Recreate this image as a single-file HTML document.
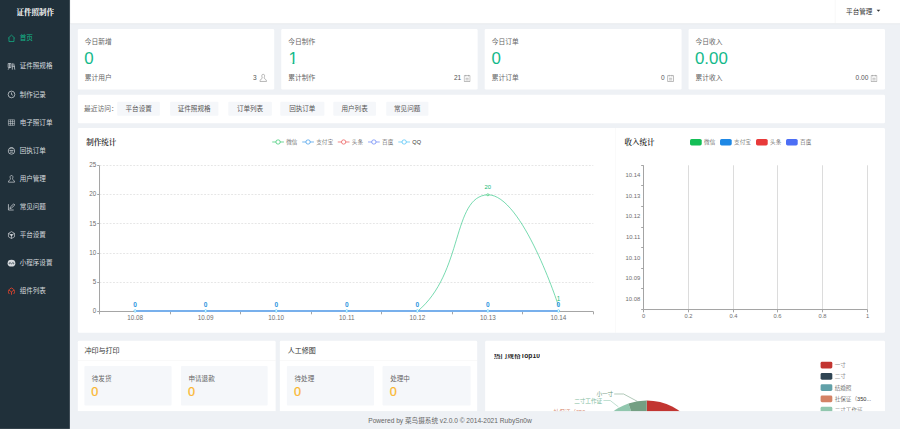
<!DOCTYPE html><html lang="zh-CN"><head><meta charset="utf-8"><title>证件照制作</title><style>
*{box-sizing:border-box;margin:0;padding:0}
html,body{width:900px;height:429px;overflow:hidden;background:#eef1f5}
body{font-family:"Liberation Sans","Noto Sans CJK SC",sans-serif;font-size:14px;color:#555}
#w{position:absolute;left:0;top:0;width:1920px;height:920px;transform:scale(0.46875);transform-origin:0 0;background:#eef1f5;overflow:hidden}
.abs{position:absolute}
#side{z-index:5;position:absolute;left:0;top:0;width:149px;height:915px;background:#20303a}
#logo{position:absolute;left:0;top:0;width:150px;height:50px;line-height:50px;text-align:center;color:#fff;font:bold 16px/50px "Noto Serif CJK SC","Liberation Serif",serif}
.mi{position:absolute;left:0;width:150px;height:60px;line-height:60px;color:#d6dade;font-size:14px;padding-left:42px;white-space:nowrap}
.mi svg{position:absolute;left:14.5px;top:20.5px;width:19px;height:19px}
.mi.on{color:#13b98a}
#head{position:absolute;left:150px;top:0;width:1770px;height:50px;background:#fff;box-shadow:0 1px 2px rgba(0,0,0,.05)}
#user{position:absolute;left:1781px;top:0;width:139px;height:50px;border-left:1px solid #f0f0f0;line-height:48px;font-size:14px;color:#333}
.card{position:absolute;background:#fff;border-radius:3px}
.lab{position:absolute;font-size:14.4px;color:#666;white-space:nowrap;line-height:20px}
.big{position:absolute;font-size:36px;line-height:40px;color:#13b98a;font-family:"Liberation Sans",sans-serif}
.rt{position:absolute;right:15.5px;font-size:14px;color:#555;line-height:20px;white-space:nowrap}
.rt svg{vertical-align:-4px;margin-left:5px}
.tag{position:absolute;top:15px;height:30px;line-height:30px;background:#f5f7fa;border-radius:2px;font-size:14px;color:#555;text-align:center;white-space:nowrap}
.ct{position:absolute;font:600 16px/24px "Liberation Sans","Noto Serif CJK SC",serif;color:#222;white-space:nowrap}
.ch{position:absolute;left:0;top:0;right:0;height:42px;border-bottom:1px solid #f2f2f2;line-height:43px;padding-left:14px;font-size:15px;color:#333}
.box{position:absolute;background:#f5f7fa;border-radius:2px}
.box .l{position:absolute;left:16px;top:16.5px;font-size:14px;line-height:20px;color:#666;white-space:nowrap}
.box .n{position:absolute;left:15px;top:36.5px;font-size:27px;line-height:36px;color:#fbb62d;-webkit-text-stroke:0.5px #fbb62d;font-family:"Liberation Sans",sans-serif}
#foot{position:absolute;left:0;top:877px;width:1920px;height:43px;background:#eef1f5;line-height:40px;text-align:center;font-size:14.1px;color:#666}
.big.one{margin-left:1.5px;clip-path:polygon(0 0,100% 0,100% 28px,12.6px 28px,12.6px 100%,8.4px 100%,8.4px 28px,0 28px)}
svg text{font-family:"Liberation Sans","Noto Sans CJK SC",sans-serif}
svg text:not([font-weight]){font-weight:300}
.pt{margin-top:-3.4px;font:bold 14.3px/14px "Liberation Sans","Noto Serif CJK SC",serif;color:#222;white-space:nowrap}
</style></head><body><div id="w"><div id="side"><div id="logo">证件照制作</div>
<div class="mi on" style="top:51px"><svg viewBox="0 0 16 16"><path d="M2 8 L8 2.5 L14 8 M3.5 7 V14 H12.5 V7" fill="none" stroke="currentColor" stroke-width="1.3"/></svg>首页</div>
<div class="mi" style="top:111px"><svg viewBox="0 0 16 16"><path d="M2 3 H7 V10 H2 Z M4.5 10 L2 14 M4.5 3 V10 M9.5 2.5 V14 M9.5 8 H14 M12 3 L14 14" fill="none" stroke="currentColor" stroke-width="1.3"/></svg>证件照规格</div>
<div class="mi" style="top:171px"><svg viewBox="0 0 16 16"><circle cx="8" cy="8" r="6" fill="none" stroke="currentColor" stroke-width="1.3"/><path d="M8 4.5 V8 L10.5 9.5" fill="none" stroke="currentColor" stroke-width="1.3"/></svg>制作记录</div>
<div class="mi" style="top:231px"><svg viewBox="0 0 16 16"><path d="M2.5 3 H13.5 V13 H2.5 Z M6.2 3 V13 M9.8 3 V13 M2.5 6.3 H13.5 M2.5 9.7 H13.5" fill="none" stroke="currentColor" stroke-width="1.5" opacity=".6"/></svg>电子照订单</div>
<div class="mi" style="top:291px"><svg viewBox="0 0 16 16"><circle cx="8" cy="8.5" r="5.8" fill="none" stroke="currentColor" stroke-width="1.3"/><path d="M4.5 7.5 H11.5 M5.5 10.5 H10.5 M5 3 H11" fill="none" stroke="currentColor" stroke-width="1.3"/></svg>回执订单</div>
<div class="mi" style="top:351px"><svg viewBox="0 0 16 16"><path d="M8 2 C5.8 2 5.2 4 5.6 6 C5.9 7.5 6.5 8 6 9 C5 10.3 2.5 10.5 2.5 14 H13.5 C13.5 10.5 11 10.3 10 9 C9.5 8 10.1 7.5 10.4 6 C10.8 4 10.2 2 8 2 Z" fill="none" stroke="currentColor" stroke-width="1.2"/></svg>用户管理</div>
<div class="mi" style="top:411px"><svg viewBox="0 0 16 16"><path d="M2.5 3 V13.5 H12 M5 11 L6 8 L12 2.5 L14 4.5 L8 10 Z" fill="none" stroke="currentColor" stroke-width="1.3"/></svg>常见问题</div>
<div class="mi" style="top:471px"><svg viewBox="0 0 16 16"><path d="M8 1.8 L13.5 5 V11 L8 14.2 L2.5 11 V5 Z M2.5 5 L8 8 L13.5 5 M8 8 V14" fill="none" stroke="currentColor" stroke-width="1.2"/><circle cx="8" cy="8" r="2" fill="currentColor"/></svg>平台设置</div>
<div class="mi" style="top:531px"><svg viewBox="0 0 16 16"><ellipse cx="8" cy="8" rx="7" ry="6" fill="currentColor"/><path d="M5 9.5 C3.5 9.5 3.5 7 5.3 7 C6.8 7 6.8 9 8 9 C9.2 9 9.2 7 10.7 7 C12.5 7 12.5 9.5 11 9.5" fill="none" stroke="#20303a" stroke-width="1.3"/></svg>小程序设置</div>
<div class="mi" style="top:591px"><svg viewBox="0 0 16 16"><path d="M4.2 12.8 C1.8 11 1.8 5.5 5 3.6 L8 2 L11 3.6 C14.2 5.5 14.2 11 11.8 12.8 M3.6 6 L8 9 L12.4 6 M8 9 V14.2" fill="none" stroke="#e8452c" stroke-width="1.5"/></svg>组件列表</div>
</div>
<div id="head"></div><div id="user"><span style="position:absolute;left:23px">平台管理</span><span style="position:absolute;left:88px;top:20.5px;border:4px solid transparent;border-top:4.8px solid #333;width:0;height:0"></span></div>
<div class="card" style="left:165.8px;top:62px;width:419.3px;height:129px"><div class="lab" style="left:15px;top:16.5px">今日新增</div><div class="big" style="left:14px;top:43px">0</div><div class="lab" style="left:15px;top:94px">累计用户</div><div class="rt" style="top:94px">3<svg width="17" height="18" viewBox="1.5 1 13 14"><path d="M8 2 C6 2 5.4 4 5.8 6 C6.1 7.5 6.6 8 6.1 9 C5.1 10.3 2.5 10.5 2.5 14 H13.5 C13.5 10.5 10.9 10.3 9.9 9 C9.4 8 9.9 7.5 10.2 6 C10.6 4 10 2 8 2 Z" fill="none" stroke="#9c9c9c" stroke-width="1.25"/></svg></div></div>
<div class="card" style="left:600.1px;top:62px;width:419.3px;height:129px"><div class="lab" style="left:15px;top:16.5px">今日制作</div><div class="big one" style="left:14px;top:43px">1</div><div class="lab" style="left:15px;top:94px">累计制作</div><div class="rt" style="top:94px">21<svg width="15" height="16" viewBox="1.5 1 13 14"><path d="M2.5 3 H13.5 V14 H2.5 Z M5.5 1.5 V4.5 M10.5 1.5 V4.5 M5 8 H11 M5 11 H11" fill="none" stroke="#9c9c9c" stroke-width="1.25"/></svg></div></div>
<div class="card" style="left:1034.3px;top:62px;width:419.3px;height:129px"><div class="lab" style="left:15px;top:16.5px">今日订单</div><div class="big" style="left:14px;top:43px">0</div><div class="lab" style="left:15px;top:94px">累计订单</div><div class="rt" style="top:94px">0<svg width="15" height="16" viewBox="1.5 1 13 14"><path d="M2.5 3 H13.5 V14 H2.5 Z M5.5 1.5 V4.5 M10.5 1.5 V4.5 M5 8 H11 M5 11 H11" fill="none" stroke="#9c9c9c" stroke-width="1.25"/></svg></div></div>
<div class="card" style="left:1468.6px;top:62px;width:419.3px;height:129px"><div class="lab" style="left:15px;top:16.5px">今日收入</div><div class="big" style="left:14px;top:43px">0.00</div><div class="lab" style="left:15px;top:94px">累计收入</div><div class="rt" style="top:94px">0.00<svg width="15" height="16" viewBox="1.5 1 13 14"><path d="M2.5 3 H13.5 V14 H2.5 Z M5.5 1.5 V4.5 M10.5 1.5 V4.5 M5 8 H11 M5 11 H11" fill="none" stroke="#9c9c9c" stroke-width="1.25"/></svg></div></div>
<div class="card" style="left:166px;top:202px;width:1722px;height:61px"><div class="lab" style="left:13px;top:20px">最近访问：</div>
<div class="tag" style="left:84.3px;width:91.0px">平台设置</div>
<div class="tag" style="left:196.7px;width:103.0px">证件照规格</div>
<div class="tag" style="left:321.0px;width:92.7px">订单列表</div>
<div class="tag" style="left:431.8px;width:94.2px">回执订单</div>
<div class="tag" style="left:545.0px;width:91.0px">用户列表</div>
<div class="tag" style="left:657.5px;width:90.2px">常见问题</div>
</div>
<div class="card" style="left:166px;top:272.5px;width:1722px;height:437px"></div>
<div class="abs" style="left:1313px;top:272.5px;width:1px;height:437px;background:#f4f4f4"></div>
<div class="ct" style="left:184.0px;top:291.9px">制作统计</div>
<div class="ct" style="left:1332.3px;top:291.9px">收入统计</div>
<div class="card" style="left:166.0px;top:727px;width:422.2px;height:160px"><div class="ch" style="padding-left:14px">冲印与打印</div><div class="box" style="left:13.8px;top:53.8px;width:186.5px;height:84.5px"><div class="l">待发货</div><div class="n">0</div></div><div class="box" style="left:220.1px;top:53.8px;width:185.0px;height:84.5px"><div class="l">申请退款</div><div class="n">0</div></div></div>
<div class="card" style="left:596.7px;top:727px;width:421.5px;height:160px"><div class="ch" style="padding-left:17px">人工修图</div><div class="box" style="left:15.6px;top:53.8px;width:185.6px;height:84.5px"><div class="l">待处理</div><div class="n">0</div></div><div class="box" style="left:219.7px;top:53.8px;width:187.7px;height:84.5px"><div class="l">处理中</div><div class="n">0</div></div></div>
<div class="card" style="left:1035.3px;top:727px;width:852.7px;height:400px"></div>
<div class="abs" style="left:1053.5px;top:754.5px;height:12px;overflow:hidden"><div class="pt">热门规格Top10</div></div>
<svg class="abs" style="left:0;top:0" width="1920" height="915" viewBox="0 0 1920 915">
<line x1="212.3" y1="602.7" x2="1265.7" y2="602.7" stroke="#e6e6e6" stroke-width="2.13" stroke-dasharray="4 3.2"/>
<line x1="212.3" y1="540.8" x2="1265.7" y2="540.8" stroke="#e6e6e6" stroke-width="2.13" stroke-dasharray="4 3.2"/>
<line x1="212.3" y1="476.8" x2="1265.7" y2="476.8" stroke="#e6e6e6" stroke-width="2.13" stroke-dasharray="4 3.2"/>
<line x1="212.3" y1="414.9" x2="1265.7" y2="414.9" stroke="#e6e6e6" stroke-width="2.13" stroke-dasharray="4 3.2"/>
<line x1="212.3" y1="353.1" x2="1265.7" y2="353.1" stroke="#e6e6e6" stroke-width="2.13" stroke-dasharray="4 3.2"/>
<line x1="207.3" y1="664.5" x2="212.3" y2="664.5" stroke="#a4a4a4" stroke-width="2.13"/>
<text x="205.3" y="667.9" font-size="13.5" fill="#6e6e6e" text-anchor="end">0</text>
<line x1="207.3" y1="602.7" x2="212.3" y2="602.7" stroke="#a4a4a4" stroke-width="2.13"/>
<text x="205.3" y="605.7" font-size="13.5" fill="#6e6e6e" text-anchor="end">5</text>
<line x1="207.3" y1="540.8" x2="212.3" y2="540.8" stroke="#a4a4a4" stroke-width="2.13"/>
<text x="205.3" y="543.4" font-size="13.5" fill="#6e6e6e" text-anchor="end">10</text>
<line x1="207.3" y1="476.8" x2="212.3" y2="476.8" stroke="#a4a4a4" stroke-width="2.13"/>
<text x="205.3" y="481.2" font-size="13.5" fill="#6e6e6e" text-anchor="end">15</text>
<line x1="207.3" y1="414.9" x2="212.3" y2="414.9" stroke="#a4a4a4" stroke-width="2.13"/>
<text x="205.3" y="418.9" font-size="13.5" fill="#6e6e6e" text-anchor="end">20</text>
<line x1="207.3" y1="353.1" x2="212.3" y2="353.1" stroke="#a4a4a4" stroke-width="2.13"/>
<text x="205.3" y="356.7" font-size="13.5" fill="#6e6e6e" text-anchor="end">25</text>
<line x1="212.3" y1="353.3" x2="212.3" y2="664.5" stroke="#a4a4a4" stroke-width="2.13"/>
<line x1="212.3" y1="664.5" x2="1265.7" y2="664.5" stroke="#a4a4a4" stroke-width="2.13"/>
<line x1="212.3" y1="664.5" x2="212.3" y2="670.5" stroke="#a4a4a4" stroke-width="2.13"/>
<line x1="363.7" y1="664.5" x2="363.7" y2="670.5" stroke="#a4a4a4" stroke-width="2.13"/>
<line x1="513.1" y1="664.5" x2="513.1" y2="670.5" stroke="#a4a4a4" stroke-width="2.13"/>
<line x1="664.5" y1="664.5" x2="664.5" y2="670.5" stroke="#a4a4a4" stroke-width="2.13"/>
<line x1="813.9" y1="664.5" x2="813.9" y2="670.5" stroke="#a4a4a4" stroke-width="2.13"/>
<line x1="965.3" y1="664.5" x2="965.3" y2="670.5" stroke="#a4a4a4" stroke-width="2.13"/>
<line x1="1114.7" y1="664.5" x2="1114.7" y2="670.5" stroke="#a4a4a4" stroke-width="2.13"/>
<line x1="1266.1" y1="664.5" x2="1266.1" y2="670.5" stroke="#a4a4a4" stroke-width="2.13"/>
<text x="288.3" y="682.0" font-size="13.5" fill="#6e6e6e" text-anchor="middle">10.08</text>
<text x="438.8" y="682.0" font-size="13.5" fill="#6e6e6e" text-anchor="middle">10.09</text>
<text x="589.3" y="682.0" font-size="13.5" fill="#6e6e6e" text-anchor="middle">10.10</text>
<text x="739.8" y="682.0" font-size="13.5" fill="#6e6e6e" text-anchor="middle">10.11</text>
<text x="890.3" y="682.0" font-size="13.5" fill="#6e6e6e" text-anchor="middle">10.12</text>
<text x="1040.8" y="682.0" font-size="13.5" fill="#6e6e6e" text-anchor="middle">10.13</text>
<text x="1191.3" y="682.0" font-size="13.5" fill="#6e6e6e" text-anchor="middle">10.14</text>
<path d="M288.3 664.5 C288.3 664.5 363.6 664.5 438.8 664.5 C514.0 664.5 514.0 664.5 589.3 664.5 C664.5 664.5 664.5 664.5 739.8 664.5 C815.0 664.5 839.0 664.5 890.3 664.5 C989.5 582.5 964.1 418.7 1040.8 415.5 C1114.6 415.5 1191.3 652.1 1191.3 652.1" fill="none" stroke="#2fc687" stroke-width="1.4"/>
<line x1="288.3" y1="663.3" x2="1191.3" y2="663.3" stroke="#78b0ec" stroke-width="4.2"/>
<circle cx="288.3" cy="663.3" r="2.6" fill="#fff" stroke="#2db7f5" stroke-width="1.2"/>
<text x="288.3" y="655.0" font-size="14" font-weight="bold" fill="#2f96de" text-anchor="middle">0</text>
<circle cx="438.8" cy="663.3" r="2.6" fill="#fff" stroke="#2db7f5" stroke-width="1.2"/>
<text x="438.8" y="655.0" font-size="14" font-weight="bold" fill="#2f96de" text-anchor="middle">0</text>
<circle cx="589.3" cy="663.3" r="2.6" fill="#fff" stroke="#2db7f5" stroke-width="1.2"/>
<text x="589.3" y="655.0" font-size="14" font-weight="bold" fill="#2f96de" text-anchor="middle">0</text>
<circle cx="739.8" cy="663.3" r="2.6" fill="#fff" stroke="#2db7f5" stroke-width="1.2"/>
<text x="739.8" y="655.0" font-size="14" font-weight="bold" fill="#2f96de" text-anchor="middle">0</text>
<circle cx="890.3" cy="663.3" r="2.6" fill="#fff" stroke="#2db7f5" stroke-width="1.2"/>
<text x="890.3" y="655.0" font-size="14" font-weight="bold" fill="#2f96de" text-anchor="middle">0</text>
<circle cx="1040.8" cy="663.3" r="2.6" fill="#fff" stroke="#2db7f5" stroke-width="1.2"/>
<text x="1040.8" y="655.0" font-size="14" font-weight="bold" fill="#2f96de" text-anchor="middle">0</text>
<circle cx="1191.3" cy="663.3" r="2.6" fill="#fff" stroke="#2db7f5" stroke-width="1.2"/>
<text x="1191.3" y="655.0" font-size="14" font-weight="bold" fill="#2f96de" text-anchor="middle">0</text>
<circle cx="1040.8" cy="415.5" r="2.2" fill="#fff" stroke="#14be56" stroke-width="1.2"/>
<text x="1040.8" y="403.5" font-size="12.5" fill="#0fb873" text-anchor="middle">20</text>
<text x="1191.3" y="641.6" font-size="13.5" fill="#0fb873" text-anchor="middle">1</text>
<line x1="580.7" y1="302.9" x2="605.7" y2="302.9" stroke="#14be56" stroke-width="1.3"/>
<circle cx="593.2" cy="302.9" r="4.6" fill="#fff" stroke="#14be56" stroke-width="1.3"/>
<text x="610.7" y="307.2" font-size="12" fill="#333">微信</text>
<line x1="644.7" y1="302.9" x2="669.7" y2="302.9" stroke="#1e88e5" stroke-width="1.3"/>
<circle cx="657.2" cy="302.9" r="4.6" fill="#fff" stroke="#1e88e5" stroke-width="1.3"/>
<text x="674.7" y="307.2" font-size="12" fill="#333">支付宝</text>
<line x1="720.6" y1="302.9" x2="745.6" y2="302.9" stroke="#e83a3a" stroke-width="1.3"/>
<circle cx="733.1" cy="302.9" r="4.6" fill="#fff" stroke="#e83a3a" stroke-width="1.3"/>
<text x="750.6" y="307.2" font-size="12" fill="#333">头条</text>
<line x1="785.1" y1="302.9" x2="810.1" y2="302.9" stroke="#4c6ef5" stroke-width="1.3"/>
<circle cx="797.6" cy="302.9" r="4.6" fill="#fff" stroke="#4c6ef5" stroke-width="1.3"/>
<text x="815.1" y="307.2" font-size="12" fill="#333">百度</text>
<line x1="849.7" y1="302.9" x2="874.7" y2="302.9" stroke="#2db7f5" stroke-width="1.3"/>
<circle cx="862.2" cy="302.9" r="4.6" fill="#fff" stroke="#2db7f5" stroke-width="1.3"/>
<text x="879.7" y="307.2" font-size="12" fill="#333">QQ</text>
<line x1="1468.8" y1="352.6" x2="1468.8" y2="660.3" stroke="#dcdcdc" stroke-width="2.13"/>
<line x1="1564.8" y1="352.6" x2="1564.8" y2="660.3" stroke="#dcdcdc" stroke-width="2.13"/>
<line x1="1658.7" y1="352.6" x2="1658.7" y2="660.3" stroke="#dcdcdc" stroke-width="2.13"/>
<line x1="1754.7" y1="352.6" x2="1754.7" y2="660.3" stroke="#dcdcdc" stroke-width="2.13"/>
<line x1="1850.7" y1="352.6" x2="1850.7" y2="660.3" stroke="#dcdcdc" stroke-width="2.13"/>
<line x1="1372.8" y1="352.6" x2="1372.8" y2="660.3" stroke="#a4a4a4" stroke-width="2.13"/>
<line x1="1372.8" y1="660.3" x2="1850.7" y2="660.3" stroke="#a4a4a4" stroke-width="2.13"/>
<line x1="1372.8" y1="660.3" x2="1372.8" y2="666.3" stroke="#a4a4a4" stroke-width="2.13"/>
<text x="1372.8" y="678.3" font-size="12.3" fill="#6e6e6e" text-anchor="middle">0</text>
<line x1="1468.8" y1="660.3" x2="1468.8" y2="666.3" stroke="#a4a4a4" stroke-width="2.13"/>
<text x="1468.8" y="678.3" font-size="12.3" fill="#6e6e6e" text-anchor="middle">0.2</text>
<line x1="1564.8" y1="660.3" x2="1564.8" y2="666.3" stroke="#a4a4a4" stroke-width="2.13"/>
<text x="1564.8" y="678.3" font-size="12.3" fill="#6e6e6e" text-anchor="middle">0.4</text>
<line x1="1658.7" y1="660.3" x2="1658.7" y2="666.3" stroke="#a4a4a4" stroke-width="2.13"/>
<text x="1658.7" y="678.3" font-size="12.3" fill="#6e6e6e" text-anchor="middle">0.6</text>
<line x1="1754.7" y1="660.3" x2="1754.7" y2="666.3" stroke="#a4a4a4" stroke-width="2.13"/>
<text x="1754.7" y="678.3" font-size="12.3" fill="#6e6e6e" text-anchor="middle">0.8</text>
<line x1="1850.7" y1="660.3" x2="1850.7" y2="666.3" stroke="#a4a4a4" stroke-width="2.13"/>
<text x="1850.7" y="678.3" font-size="12.3" fill="#6e6e6e" text-anchor="middle">1</text>
<line x1="1367.8" y1="660.3" x2="1372.8" y2="660.3" stroke="#a4a4a4" stroke-width="2.13"/>
<line x1="1367.8" y1="615.5" x2="1372.8" y2="615.5" stroke="#a4a4a4" stroke-width="2.13"/>
<line x1="1367.8" y1="572.8" x2="1372.8" y2="572.8" stroke="#a4a4a4" stroke-width="2.13"/>
<line x1="1367.8" y1="528.0" x2="1372.8" y2="528.0" stroke="#a4a4a4" stroke-width="2.13"/>
<line x1="1367.8" y1="485.3" x2="1372.8" y2="485.3" stroke="#a4a4a4" stroke-width="2.13"/>
<line x1="1367.8" y1="440.5" x2="1372.8" y2="440.5" stroke="#a4a4a4" stroke-width="2.13"/>
<line x1="1367.8" y1="395.7" x2="1372.8" y2="395.7" stroke="#a4a4a4" stroke-width="2.13"/>
<line x1="1367.8" y1="353.1" x2="1372.8" y2="353.1" stroke="#a4a4a4" stroke-width="2.13"/>
<text x="1365.8" y="641.7" font-size="12.6" fill="#6e6e6e" text-anchor="end">10.08</text>
<text x="1365.8" y="597.7" font-size="12.6" fill="#6e6e6e" text-anchor="end">10.09</text>
<text x="1365.8" y="553.8" font-size="12.6" fill="#6e6e6e" text-anchor="end">10.10</text>
<text x="1365.8" y="509.9" font-size="12.6" fill="#6e6e6e" text-anchor="end">10.11</text>
<text x="1365.8" y="465.9" font-size="12.6" fill="#6e6e6e" text-anchor="end">10.12</text>
<text x="1365.8" y="422.0" font-size="12.6" fill="#6e6e6e" text-anchor="end">10.13</text>
<text x="1365.8" y="378.0" font-size="12.6" fill="#6e6e6e" text-anchor="end">10.14</text>
<rect x="1472.0" y="296.3" width="25" height="14" rx="3.5" fill="#14be56"/>
<text x="1502.0" y="307.7" font-size="12" fill="#333">微信</text>
<rect x="1536.0" y="296.3" width="25" height="14" rx="3.5" fill="#1e88e5"/>
<text x="1566.0" y="307.7" font-size="12" fill="#333">支付宝</text>
<rect x="1612.8" y="296.3" width="25" height="14" rx="3.5" fill="#e83a3a"/>
<text x="1642.8" y="307.7" font-size="12" fill="#333">头条</text>
<rect x="1676.8" y="296.3" width="25" height="14" rx="3.5" fill="#4c6ef5"/>
<text x="1706.8" y="307.7" font-size="12" fill="#333">百度</text>
</svg>
<svg class="abs" style="left:0;top:0" width="1920" height="915" viewBox="0 0 1920 915">
<path d="M1379.6 974.4 L1379.6 854.4 A120 120 0 0 1 1492.4 1015.4 Z" fill="#c23531"/>
<path d="M1379.6 974.4 L1492.4 1015.4 A120 120 0 0 1 1358.8 1092.6 Z" fill="#2f4554"/>
<path d="M1379.6 974.4 L1358.8 1092.6 A120 120 0 0 1 1266.9 1015.4 Z" fill="#61a0a8"/>
<path d="M1379.6 974.4 L1266.9 1015.4 A120 120 0 0 1 1275.7 914.4 Z" fill="#d48265"/>
<path d="M1379.6 974.4 L1275.7 914.4 A120 120 0 0 1 1340.6 860.9 Z" fill="#91c7ae"/>
<path d="M1379.6 974.4 L1340.6 860.9 A120 120 0 0 1 1379.6 854.4 Z" fill="#749f83"/>
<path d="M1359.4 856.1 L1330.3 840.5 H1310.3" fill="none" stroke="#749f83" stroke-width="1.2"/>
<text x="1308.2" y="844.8" font-size="12" font-weight="normal" fill="#6b987b" text-anchor="end">小一寸</text>
<path d="M1319.3 868.1 L1301.8 854.4 H1287.3" fill="none" stroke="#91c7ae" stroke-width="1.2"/>
<text x="1284.7" y="858.7" font-size="12" font-weight="normal" fill="#82bda2" text-anchor="end">二寸工作证</text>
<text x="1258.7" y="882.4" font-size="12" font-weight="normal" fill="#d48265" text-anchor="end">社保证（350...</text>
<rect x="1750.6" y="771.9" width="25" height="14" rx="3" fill="#c23531"/>
<text x="1780.6" y="783.2" font-size="12" fill="#333">一寸</text>
<rect x="1750.6" y="795.9" width="25" height="14" rx="3" fill="#2f4554"/>
<text x="1780.6" y="807.2" font-size="12" fill="#333">二寸</text>
<rect x="1750.6" y="819.9" width="25" height="14" rx="3" fill="#61a0a8"/>
<text x="1780.6" y="831.2" font-size="12" fill="#333">结婚照</text>
<rect x="1750.6" y="843.9" width="25" height="14" rx="3" fill="#d48265"/>
<text x="1780.6" y="855.2" font-size="12" fill="#333">社保证（350...</text>
<rect x="1750.6" y="867.9" width="25" height="14" rx="3" fill="#91c7ae"/>
<text x="1780.6" y="879.2" font-size="12" fill="#333">二寸工作证</text>
<rect x="1750.6" y="891.9" width="25" height="14" rx="3" fill="#749f83"/>
<text x="1780.6" y="903.2" font-size="12" fill="#333">小一寸</text>
</svg>
<div id="foot">Powered by 菜鸟摄系统 v2.0.0 © 2014-2021 RubySn0w</div></div></body></html>
